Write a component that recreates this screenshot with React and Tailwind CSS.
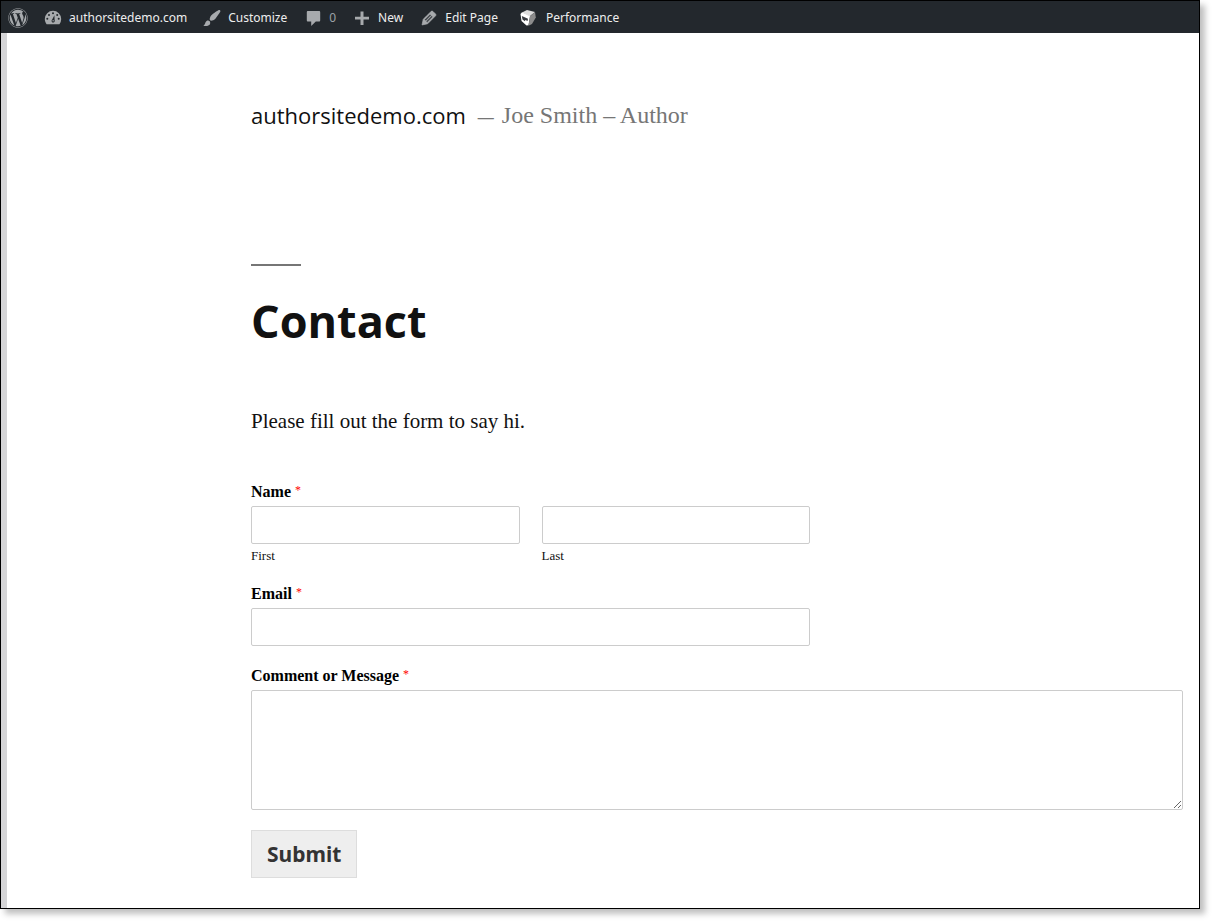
import React, { useState } from 'react';
import { FaWordpress } from 'react-icons/fa';

// Icons for the admin bar
const DashboardIcon = () => (
  <svg viewBox="0 0 20 20" className="size-5" fill="currentColor" aria-hidden="true">
    <path
      fillRule="evenodd"
      d="M3.600 16.200h12.800A8.200 8.200 0 0 0 18.200 11a8.200 8.200 0 0 0-16.400 0c0 2 .7 3.800 1.800 5.200zM10 4.200a1 1 0 1 1 0 2 1 1 0 0 1 0-2zM6 5.900a1 1 0 1 1 0 2 1 1 0 0 1 0-2zM14.200 5.900a1 1 0 1 1 0 2 1 1 0 0 1 0-2zM4.300 9.700a1 1 0 1 1 0 2 1 1 0 0 1 0-2zM15.700 9.700a1 1 0 1 1 0 2 1 1 0 0 1 0-2zM11.400 7.200l.2 4.900c.3.800.2 1.600-.5 2.100a1.600 1.600 0 0 1-2.300-.5c-.4-.8-.2-1.600.4-2.100z"
    />
    <circle cx="10.1" cy="12.800" r="0.700" />
  </svg>
);

const BrushIcon = () => (
  <svg viewBox="0 0 20 20" className="size-5" fill="currentColor" aria-hidden="true">
    <path d="M18.33 3.57s.27-.8-.31-1.36c-.53-.52-1.22-.24-1.22-.24-.61.3-5.76 3.47-7.67 5.57-.86.96-2.06 3.79-1.09 4.82.92.98 3.96-.17 4.79-1 2.06-2.06 5.21-7.17 5.5-7.79zM1.4 17.65c2.37-1.56 1.46-3.41 3.23-4.64.93-.65 2.22-.62 3.08.29.63.67.8 2.57-.16 3.46-1.57 1.45-4 1.55-6.15.89z" />
  </svg>
);

const CommentIcon = () => (
  <svg viewBox="0 0 20 20" className="size-5" fill="currentColor" aria-hidden="true">
    <path d="M5 3h11c.8 0 1.2.5 1.2 1.2v8.1c0 .8-.4 1.2-1.2 1.2h-3.2L8.2 18v-4.500H5c-.8 0-1.200-.4-1.200-1.200V4.200C3.800 3.500 4.200 3 5 3z" />
  </svg>
);

const PlusIcon = () => (
  <svg viewBox="0 0 20 20" className="size-5" fill="currentColor" aria-hidden="true">
    <path d="M8.500 3.500h3v5.300H17v2.800h-5.500V17h-3v-5.400H3V8.800h5.500z" />
  </svg>
);

const PencilIcon = () => (
  <svg viewBox="0 0 20 20" className="size-5" fill="currentColor" stroke="currentColor" strokeWidth="0.700" aria-hidden="true">
    <path d="M13.89 3.39l2.71 2.72c.46.46.42 1.24.03 1.64l-8.01 8.02-5.56 1.16 1.16-5.58s7.6-7.63 7.99-8.03c.39-.39 1.22-.39 1.68.07zm-2.73 2.79l-5.59 5.61 1.11 1.11 5.54-5.65zm-2.97 8.23l5.58-5.6-1.07-1.08-5.59 5.6z" />
  </svg>
);

const CubeIcon = () => (
  <svg viewBox="0 0 20 20" className="size-5" aria-hidden="true">
    <path d="M4 4.500L9 2l8 2-5.500 4.500z" fill="#dcdcdc" />
    <path d="M2.500 6l1.500-1.800 8 4-1.500 9-2 .3L3.500 13z" fill="#ffffff" />
    <path d="M12 8.200L17 4l.8 5.500-3.800 6.500-3.500 1.700z" fill="#8c8c8c" />
    <path d="M3.800 8l6.200 2.800-.4 2.200-2.300-1-.4 1.200-2.400-1.700z" fill="#3a3d42" />
  </svg>
);

const AdminLink = ({ icon, children, className }) => (
  <a href="#" className={`flex items-center ${className}`}>
    <span className="text-[#a7aaad]">{icon}</span>
    {children}
  </a>
);

function AdminBar() {
  return (
    <nav className="flex h-8 items-center bg-[#23282d] pt-[2px] pl-[7px] font-['Noto_Sans','Open_Sans',sans-serif] text-xs text-[#eeeeee]">
      <a href="#" aria-label="About WordPress" className="mr-[15px] text-[#a7aaad]">
        <FaWordpress size={20} />
      </a>
      <AdminLink icon={<DashboardIcon />} className="mr-[15px] gap-[6px]">
        authorsitedemo.com
      </AdminLink>
      <AdminLink icon={<BrushIcon />} className="mr-4 gap-[6px]">
        Customize
      </AdminLink>
      <AdminLink icon={<CommentIcon />} className="mr-4 gap-[6px]">
        <span className="text-[#9ca2a7]">0</span>
      </AdminLink>
      <AdminLink icon={<PlusIcon />} className="mr-4 gap-[6px]">
        New
      </AdminLink>
      <AdminLink icon={<PencilIcon />} className="mr-5 gap-[6px]">
        Edit Page
      </AdminLink>
      <AdminLink icon={<CubeIcon />} className="gap-2">
        Performance
      </AdminLink>
    </nav>
  );
}

// Red star behind every mandatory label
const Required = () => <span className="align-top text-xs leading-4 font-normal text-[#ff0000]">*</span>;

const labelClass = 'mb-1 block h-5 text-base leading-5 font-bold text-black';
const fieldClass = 'block w-full rounded-[2px] border border-[#cccccc] bg-white px-2 text-base outline-none';

function ContactForm() {
  const [values, setValues] = useState({ first: '', last: '', email: '', message: '' });

  const handleChange = (e) => {
    setValues({ ...values, [e.target.name]: e.target.value });
  };

  return (
    <form className="mt-[43px] flex flex-col items-start gap-5" onSubmit={(e) => e.preventDefault()}>
      <fieldset className="w-3/5">
        <legend className={labelClass}>
          Name <Required />
        </legend>
        <div className="grid grid-cols-2 gap-[22px]">
          <div>
            <input id="first" name="first" type="text" value={values.first} onChange={handleChange} className={`h-[38px] ${fieldClass}`} />
            <label htmlFor="first" className="mt-1 block text-[13px] leading-4">First</label>
          </div>
          <div>
            <input id="last" name="last" type="text" value={values.last} onChange={handleChange} className={`h-[38px] ${fieldClass}`} />
            <label htmlFor="last" className="mt-1 block text-[13px] leading-4">Last</label>
          </div>
        </div>
      </fieldset>

      <div className="w-3/5">
        <label htmlFor="email" className={labelClass}>
          Email <Required />
        </label>
        <input id="email" name="email" type="email" value={values.email} onChange={handleChange} className={`h-[38px] ${fieldClass}`} />
      </div>

      <div className="w-full">
        <label htmlFor="message" className={labelClass}>
          Comment or Message <Required />
        </label>
        <textarea id="message" name="message" value={values.message} onChange={handleChange} className={`h-[120px] ${fieldClass}`} />
      </div>

      <button
        type="submit"
        className="h-12 border border-[#dddddd] bg-[#eeeeee] px-[15px] pt-[2px] font-['Noto_Sans','Open_Sans',sans-serif] text-[21px] font-bold text-[#333333]"
      >
        Submit
      </button>
    </form>
  );
}

function App() {
  return (
    <div className="bg-white pr-[15px] pb-[15px]">
      <div className="border border-black shadow-[5px_5px_6px_rgba(0,0,0,0.25)]">
        <AdminBar />
        <div className="border-l-[6px] border-[#d5d5d7] bg-white pt-16 pr-4 pb-[30px] pl-[244px] font-['Liberation_Serif',serif] text-[#111111]">
          <header className="flex items-center gap-3 leading-9">
            <a href="#" className="font-['Open_Sans','Noto_Sans',sans-serif] text-[22px] leading-9">
              authorsitedemo.com
            </a>
            <p className="text-2xl leading-9 text-[#767676]">
              <span className="mr-[2px] text-base leading-none font-bold">—</span> Joe Smith – Author
            </p>
          </header>

          <main className="mt-[131px]">
            <div className="h-[2px] w-[50px] bg-[#767676]" />
            <h1 className="mt-[27px] font-['Open_Sans','Noto_Sans',sans-serif] text-[45px] leading-14 font-bold">Contact</h1>
            <p className="mt-[54px] text-[21px] leading-9">Please fill out the form to say hi.</p>
            <ContactForm />
          </main>
        </div>
      </div>
    </div>
  );
}

export default App;
